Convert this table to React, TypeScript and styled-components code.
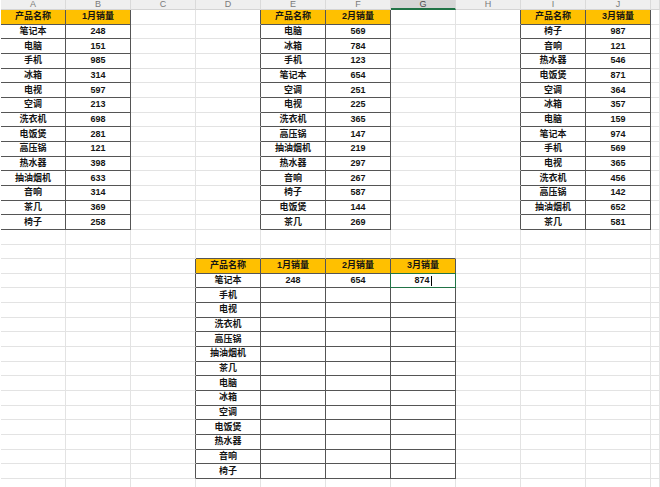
import React from "react";
import styled, { createGlobalStyle } from "styled-components";

const Global = createGlobalStyle`
  html, body { margin: 0; padding: 0; background: #ffffff; overflow: hidden; }
  #root { width: 660px; height: 487px; overflow: hidden; }
`;

const COLS = 11;
const ROWS = 33;
const LETTERS = ["A", "B", "C", "D", "E", "F", "G", "H", "I", "J", ""];
const ACTIVE_COL = 6;

type TableDef = { row: number; col: number; data: string[][] };

const tables: TableDef[] = [
  {
    row: 1,
    col: 0,
    data: [
      ["产品名称", "1月销量"],
      ["笔记本", "248"],
      ["电脑", "151"],
      ["手机", "985"],
      ["冰箱", "314"],
      ["电视", "597"],
      ["空调", "213"],
      ["洗衣机", "698"],
      ["电饭煲", "281"],
      ["高压锅", "121"],
      ["热水器", "398"],
      ["抽油烟机", "633"],
      ["音响", "314"],
      ["茶几", "369"],
      ["椅子", "258"],
    ],
  },
  {
    row: 1,
    col: 4,
    data: [
      ["产品名称", "2月销量"],
      ["电脑", "569"],
      ["冰箱", "784"],
      ["手机", "123"],
      ["笔记本", "654"],
      ["空调", "251"],
      ["电视", "225"],
      ["洗衣机", "365"],
      ["高压锅", "147"],
      ["抽油烟机", "219"],
      ["热水器", "297"],
      ["音响", "267"],
      ["椅子", "587"],
      ["电饭煲", "144"],
      ["茶几", "269"],
    ],
  },
  {
    row: 1,
    col: 8,
    data: [
      ["产品名称", "3月销量"],
      ["椅子", "987"],
      ["音响", "121"],
      ["热水器", "546"],
      ["电饭煲", "871"],
      ["空调", "364"],
      ["冰箱", "357"],
      ["电脑", "159"],
      ["笔记本", "974"],
      ["手机", "569"],
      ["电视", "365"],
      ["洗衣机", "456"],
      ["高压锅", "142"],
      ["抽油烟机", "652"],
      ["茶几", "581"],
    ],
  },
  {
    row: 18,
    col: 3,
    data: [
      ["产品名称", "1月销量", "2月销量", "3月销量"],
      ["笔记本", "248", "654", "874"],
      ...["手机", "电视", "洗衣机", "高压锅", "抽油烟机", "茶几", "电脑", "冰箱", "空调", "电饭煲", "热水器", "音响", "椅子"].map(
        (n) => [n, "", "", ""]
      ),
    ],
  },
];

const ACTIVE = { row: 19, col: 6 };

type CellInfo = { text: string; head: boolean };
const cellMap = new Map<string, CellInfo>();
tables.forEach((t) => {
  t.data.forEach((rowData, i) => {
    rowData.forEach((text, j) => {
      cellMap.set(`${t.row + i},${t.col + j}`, { text, head: i === 0 });
    });
  });
});
const inTable = (r: number, c: number) => cellMap.has(`${r},${c}`);

const Sheet = styled.div`
  display: grid;
  grid-template-columns: repeat(10, 65px) 1fr;
  grid-template-rows: 10px repeat(${ROWS}, 14.667px);
  width: 660px;
  height: 487px;
  overflow: hidden;
  padding-left: 1px;
  box-sizing: border-box;
`;

const ColHead = styled.div<{ $active: boolean }>`
  box-sizing: border-box;
  display: flex;
  align-items: center;
  justify-content: center;
  background: ${(p) => (p.$active ? "#d6d6d6" : "#efefef")};
  border-right: 1px solid #dadada;
  border-bottom: ${(p) => (p.$active ? "2px solid #217346" : "1px solid #d4d4d4")};
  color: ${(p) => (p.$active ? "#4a4a4a" : "#7a7a7a")};
  font: 9px/9px "Liberation Sans", "Noto Sans CJK SC", sans-serif;
  overflow: hidden;
`;

const Cell = styled.div<{ $fill: boolean; $r: boolean; $b: boolean }>`
  box-sizing: border-box;
  position: relative;
  display: flex;
  align-items: center;
  justify-content: center;
  background: ${(p) => (p.$fill ? "#ffc000" : "#ffffff")};
  border-right: 1px solid ${(p) => (p.$r ? "#555555" : "#e3e3e3")};
  border-bottom: 1px solid ${(p) => (p.$b ? "#555555" : "#e3e3e3")};
  color: #141414;
  font-family: "Liberation Sans", "Noto Sans CJK SC", sans-serif;
  font-size: 9px;
  font-weight: bold;
  line-height: 1;
  white-space: nowrap;
`;

const ActiveFrame = styled.div`
  position: absolute;
  left: -1px;
  top: -1px;
  right: -1px;
  bottom: -1px;
  border: 1px solid #217346;
  pointer-events: none;
`;

const Caret = styled.span`
  display: inline-block;
  width: 0;
  height: 10px;
  border-right: 1px solid #000;
  margin-left: 1px;
  vertical-align: middle;
`;

const CellText = styled.span`
  display: inline-flex;
  align-items: center;
`;

export default function App() {
  const cells: React.ReactNode[] = [];
  for (let c = 0; c < COLS; c++) {
    cells.push(
      <ColHead key={`h${c}`} $active={c === ACTIVE_COL}>
        {LETTERS[c]}
      </ColHead>
    );
  }
  for (let r = 1; r <= ROWS; r++) {
    for (let c = 0; c < COLS; c++) {
      const info = cellMap.get(`${r},${c}`);
      const isActive = r === ACTIVE.row && c === ACTIVE.col;
      cells.push(
        <Cell
          key={`${r},${c}`}
          $fill={!!info?.head}
          $r={inTable(r, c) || inTable(r, c + 1)}
          $b={inTable(r, c) || inTable(r + 1, c)}
        >
          {isActive ? (
            <>
              <CellText>
                {info?.text}
                <Caret />
              </CellText>
              <ActiveFrame />
            </>
          ) : (
            info?.text
          )}
        </Cell>
      );
    }
  }
  return (
    <>
      <Global />
      <Sheet>{cells}</Sheet>
    </>
  );
}
